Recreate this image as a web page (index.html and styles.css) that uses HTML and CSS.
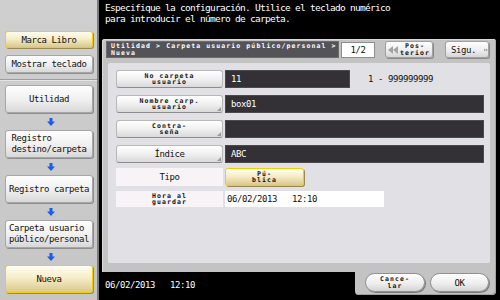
FILE: index.html
```html
<!DOCTYPE html>
<html lang="es">
<head>
<meta charset="utf-8">
<title>Carpeta usuario</title>
<link rel="stylesheet" href="styles.css">
</head>
<body>
<div class="screen">
  <aside class="sidebar">
    <div class="side-top">
      <div class="sbtn yellow short">Marca Libro</div>
      <div class="sbtn short second">Mostrar teclado</div>
    </div>
    <div class="side-flow">
      <div class="sbtn step">Utilidad</div>
      <div class="conn"><svg width="8" height="8" viewBox="0 0 8 8"><polygon points="2.5,0 5.5,0 5.5,3.5 8,3.5 4,8 0,3.5 2.5,3.5" fill="#1c5ce8"/></svg></div>
      <div class="sbtn step"><span class="lines">Registro<br>destino/carpeta</span></div>
      <div class="conn"><svg width="8" height="8" viewBox="0 0 8 8"><polygon points="2.5,0 5.5,0 5.5,3.5 8,3.5 4,8 0,3.5 2.5,3.5" fill="#1c5ce8"/></svg></div>
      <div class="sbtn step">Registro carpeta</div>
      <div class="conn"><svg width="8" height="8" viewBox="0 0 8 8"><polygon points="2.5,0 5.5,0 5.5,3.5 8,3.5 4,8 0,3.5 2.5,3.5" fill="#1c5ce8"/></svg></div>
      <div class="sbtn step"><span class="lines">Carpeta usuario<br>público/personal</span></div>
      <div class="conn"><svg width="8" height="8" viewBox="0 0 8 8"><polygon points="2.5,0 5.5,0 5.5,3.5 8,3.5 4,8 0,3.5 2.5,3.5" fill="#1c5ce8"/></svg></div>
      <div class="sbtn step yellow">Nueva</div>
    </div>
  </aside>
  <main class="main">
    <div class="msg">Especifique la configuración. Utilice el teclado numérico<br>para introducir el número de carpeta.</div>
    <section class="panel">
      <div class="head">
        <div class="crumb">Utilidad &gt; Carpeta usuario público/personal &gt;<br>Nueva</div>
        <div class="page">1/2</div>
        <div class="nav prev">
          <svg width="10" height="8" viewBox="0 0 10 8"><polygon points="5,0 5,8 0,4" fill="#a3a3a3"/><polygon points="10,0 10,8 5,4" fill="#a3a3a3"/></svg>
          <span class="tiny">Pos-<br>terior</span>
        </div>
        <div class="nav next">
          <span>Sigu.</span>
          <svg width="10" height="8" viewBox="0 0 10 8"><polygon points="0,0 5,4 0,8" fill="#a3a3a3"/><polygon points="5,0 10,4 5,8" fill="#a3a3a3"/></svg>
        </div>
      </div>
      <div class="inner">
        <div class="row">
          <div class="lbl"><span class="tiny">No carpeta<br>usuario</span></div>
          <div class="fld dark short-f">11</div>
          <div class="range">1 - 999999999</div>
        </div>
        <div class="row">
          <div class="lbl fold"><span class="tiny">Nombre carp.<br>usuario</span></div>
          <div class="fld dark wide">box01</div>
        </div>
        <div class="row">
          <div class="lbl fold"><span class="tiny">Contra-<br>seña</span></div>
          <div class="fld dark wide"></div>
        </div>
        <div class="row tight">
          <div class="lbl fold">Índice</div>
          <div class="fld dark wide">ABC</div>
        </div>
        <div class="row tight">
          <div class="lbl plain">Tipo</div>
          <div class="opt"><span class="tiny">Pú-<br>blica</span></div>
        </div>
        <div class="row last">
          <div class="lbl plain"><span class="tiny">Hora al<br>guardar</span></div>
          <div class="fld white">06/02/2013   12:10</div>
        </div>
      </div>
    </section>
    <div class="foot">
      <div class="clock">06/02/2013   12:10</div>
      <div class="tab">
        <div class="pill cancel"><span class="tiny">Cance-<br>lar</span></div>
        <div class="pill ok">OK</div>
      </div>
    </div>
  </main>
</div>
</body>
</html>
```
FILE: styles.css
```css
* { box-sizing: border-box; }
html, body { margin: 0; padding: 0; }
body {
  width: 500px;
  height: 300px;
  overflow: hidden;
  background: #000;
  font-family: "DejaVu Sans Mono", "Liberation Mono", monospace;
  font-size: 9px;
  letter-spacing: -0.42px;
  color: #111;
}
.screen { display: flex; width: 500px; height: 300px; }

/* sidebar */
.sidebar {
  width: 99px;
  height: 300px;
  background: linear-gradient(#cfcfcf, #c6c6c6);
  border-right: 2px solid #7c7c7c;
  display: flex;
  flex-direction: column;
}
.side-top {
  height: 80px;
  padding: 31px 0 0 5px;
  border-bottom: 1px solid #9d9d9d;
  box-shadow: 0 1px 0 #e4e4e4;
}
.side-flow { padding: 5px 0 0 5px; display: flex; flex-direction: column; }
.sbtn {
  width: 88px;
  display: flex;
  align-items: center;
  justify-content: center;
  background: linear-gradient(#fefefe, #efefef 55%, #d8d8d8);
  border: 1px solid #a6a6a6;
  border-radius: 3px;
  box-shadow: 1px 1px 0 #8e8e8e;
  white-space: nowrap;
}
.sbtn.short { height: 17px; }
.sbtn.second { margin-top: 7px; height: 18px; }
.sbtn.step { height: 28px; }
.sbtn .lines { text-align: left; line-height: 11px; }
.yellow {
  background: linear-gradient(#fffdf1, #f6edc8 45%, #dac88e);
  border: 1.5px solid #f1cf00;
  box-shadow: 1px 1px 0 #9a8a50;
}
.conn { height: 17px; display: flex; align-items: center; justify-content: center; }

/* main */
.main { width: 401px; display: flex; flex-direction: column; }
.msg {
  height: 39px;
  padding: 2px 0 0 6px;
  color: #fff;
  font-size: 9.5px;
  letter-spacing: -0.72px;
  line-height: 11px;
  white-space: nowrap;
}
.panel {
  margin-left: 3px;
  width: 394px;
  height: 233px;
  background: #c3c3c3;
  border-radius: 3px 3px 0 0;
  box-shadow: inset 1px 1px 0 #dadada, inset -1px 0 0 #a5a5a5;
  display: flex;
  flex-direction: column;
}
.head { margin: 2px 0 0 4px; height: 17px; display: flex; }
.crumb {
  width: 233px;
  background: #545357;
  border: 1px solid #6c6c6c;
  color: #fff;
  font-size: 6.5px;
  font-weight: bold;
  letter-spacing: 1.1px;
  line-height: 6.5px;
  padding: 1px 0 0 4px;
  white-space: nowrap;
}
.page {
  margin: 1px 0 0 2px;
  width: 34px;
  height: 16px;
  background: #fff;
  border: 1px solid #8d8d8d;
  text-align: center;
  line-height: 14px;
}
.nav {
  height: 17px;
  display: flex;
  align-items: center;
  background: linear-gradient(#fefefe, #eeeeee 55%, #d6d6d6);
  border: 1px solid #a0a0a0;
  border-radius: 3px;
  box-shadow: 1px 1px 0 #8a8a8a;
}
.nav.prev { margin-left: 10px; width: 48px; padding-left: 2px; gap: 2px; }
.nav.next { margin-left: 12px; width: 44px; padding-left: 5px; gap: 8px; }
.tiny {
  font-size: 6.5px;
  font-weight: bold;
  letter-spacing: 1.1px;
  line-height: 6.5px;
  text-align: center;
  white-space: nowrap;
}
.inner {
  margin: 5px 6px 0 6px;
  height: 200px;
  background: #e1e0e4;
  border-radius: 2px;
  padding: 7px 0 0 8px;
}
.row { display: flex; align-items: center; height: 18px; margin-bottom: 7px; }
.row.tight { margin-bottom: 5px; }
.row.last { height: 16px; margin-bottom: 0; }
.lbl {
  position: relative;
  width: 107px;
  height: 18px;
  margin-right: 2px;
  display: flex;
  align-items: center;
  justify-content: center;
  background: linear-gradient(#ffffff, #f0f0f0 50%, #d9d9d9);
  border: 1px solid #b8b8b8;
  border-bottom-color: #8c8c8c;
  border-radius: 3px;
}
.lbl.fold::after {
  content: "";
  position: absolute;
  right: 1px;
  bottom: 1px;
  border-left: 4px solid transparent;
  border-bottom: 4px solid #9a9a9a;
}
.lbl.plain {
  background: #f7f3f7;
  border: none;
  border-radius: 0;
}
.row.last .lbl { height: 16px; }
.fld {
  height: 18px;
  display: flex;
  align-items: center;
  padding-left: 5px;
  white-space: pre;
}
.fld.dark {
  background: #333135;
  border: 1px solid #4b494d;
  color: #fff;
}
.fld.short-f { width: 125px; }
.fld.wide { width: 259px; }
.fld.white { width: 159px; height: 16px; background: #fff; padding-left: 2px; }
.range { margin-left: 18px; }
.opt {
  width: 79px;
  height: 18px;
  display: flex;
  align-items: center;
  justify-content: center;
  background: linear-gradient(#fffdf1, #f6edc8 45%, #dac88e);
  border: 1.5px solid #f1cf00;
  border-radius: 3px;
  box-shadow: 1px 1px 0 #9a8a50;
}

/* footer */
.foot { height: 28px; display: flex; }
.clock {
  width: 256px;
  padding: 8px 0 0 6px;
  color: #fff;
  white-space: pre;
}
.tab {
  width: 141px;
  height: 23px;
  background: #c3c3c3;
  border-radius: 0 0 4px 4px;
  box-shadow: inset -1px -1px 0 #a0a0a0;
  display: flex;
  padding: 1px 0 0 10px;
}
.pill {
  height: 19px;
  display: flex;
  align-items: center;
  justify-content: center;
  background: linear-gradient(#fefefe, #eeeeee 55%, #d4d4d4);
  border: 1px solid #8f8f8f;
  border-radius: 10px;
  box-shadow: 1px 1px 0 #7a7a7a;
}
.pill.cancel { width: 60px; }
.pill.ok { width: 59px; margin-left: 5px; }
```
